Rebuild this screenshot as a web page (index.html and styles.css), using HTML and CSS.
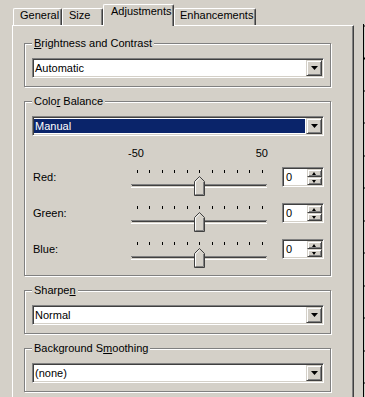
FILE: index.html
```html
<!DOCTYPE html>
<html>
<head>
  <title>Adjustments</title>
  <meta charset="UTF-8">
  <link rel="stylesheet" href="styles.css">
</head>
<body>
  <svg class="defs" width="0" height="0">
    <symbol id="slider" viewBox="0 0 136 30">
      <!-- риски шкалы -->
      <rect x="6" y="3" width="1" height="3" fill="#000"/>
      <rect x="18" y="3" width="1" height="3" fill="#000"/>
      <rect x="31" y="3" width="1" height="3" fill="#000"/>
      <rect x="43" y="3" width="1" height="3" fill="#000"/>
      <rect x="56" y="3" width="1" height="3" fill="#000"/>
      <rect x="68" y="3" width="1" height="3" fill="#000"/>
      <rect x="81" y="3" width="1" height="3" fill="#000"/>
      <rect x="93" y="3" width="1" height="3" fill="#000"/>
      <rect x="106" y="3" width="1" height="3" fill="#000"/>
      <rect x="118" y="3" width="1" height="3" fill="#000"/>
      <rect x="131" y="3" width="1" height="3" fill="#000"/>
      <!-- дорожка -->
      <rect x="0" y="17" width="136" height="1" fill="#808080"/>
      <rect x="1" y="18" width="134" height="1" fill="#404040"/>
      <rect x="1" y="19" width="134" height="1" fill="#d4d0c8"/>
      <rect x="0" y="20" width="136" height="1" fill="#fff"/>
      <!-- ползунок -->
      <polygon points="63.5,14.5 68.5,9.5 73.5,14.5 73.5,28.5 63.5,28.5" fill="#d4d0c8" stroke="#404040" stroke-width="1"/>
      <polyline points="64.5,27.5 64.5,14.9 68.5,10.9" fill="none" stroke="#fff" stroke-width="1"/>
      <polyline points="64.5,27.5 72.5,27.5 72.5,14.9" fill="none" stroke="#808080" stroke-width="1"/>
    </symbol>
    <symbol id="down" viewBox="0 0 7 4">
      <polygon points="0,0 7,0 3.5,4" fill="#000"/>
    </symbol>
  </svg>

  <div class="window">
    <div class="tabs">
      <div class="tab tab-general">General</div>
      <div class="tab tab-size">Size</div>
      <div class="tab tab-adj active">Adjustments</div>
      <div class="tab tab-enh">Enhancements</div>
    </div>

    <div class="panel">
      <div class="group">
        <div class="legend"><u>B</u>rightness and Contrast</div>
        <div class="combo">
          <span class="combo-text">Automatic</span>
          <span class="drop"><svg width="7" height="4"><use href="#down"/></svg></span>
        </div>
      </div>

      <div class="group">
        <div class="legend">Colo<u>r</u> Balance</div>
        <div class="combo">
          <span class="combo-text selected">Manual</span>
          <span class="drop"><svg width="7" height="4"><use href="#down"/></svg></span>
        </div>
        <div class="scale"><span>-50</span><span>50</span></div>

        <div class="slider-row">
          <span class="row-label">Red:</span>
          <svg class="slider" width="136" height="30"><use href="#slider"/></svg>
          <div class="spin">
            <span class="spin-text">0</span>
            <span class="spin-btns">
              <span class="spin-btn up"></span>
              <span class="spin-btn dn"></span>
            </span>
          </div>
        </div>
        <div class="slider-row">
          <span class="row-label">Green:</span>
          <svg class="slider" width="136" height="30"><use href="#slider"/></svg>
          <div class="spin">
            <span class="spin-text">0</span>
            <span class="spin-btns">
              <span class="spin-btn up"></span>
              <span class="spin-btn dn"></span>
            </span>
          </div>
        </div>
        <div class="slider-row">
          <span class="row-label">Blue:</span>
          <svg class="slider" width="136" height="30"><use href="#slider"/></svg>
          <div class="spin">
            <span class="spin-text">0</span>
            <span class="spin-btns">
              <span class="spin-btn up"></span>
              <span class="spin-btn dn"></span>
            </span>
          </div>
        </div>
      </div>

      <div class="group">
        <div class="legend">Sharpe<u>n</u></div>
        <div class="combo">
          <span class="combo-text">Normal</span>
          <span class="drop"><svg width="7" height="4"><use href="#down"/></svg></span>
        </div>
      </div>

      <div class="group last">
        <div class="legend">Background S<u>m</u>oothing</div>
        <div class="combo">
          <span class="combo-text">(none)</span>
          <span class="drop"><svg width="7" height="4"><use href="#down"/></svg></span>
        </div>
      </div>
    </div>
  </div>

  <div class="ruler"></div>
</body>
</html>
```

FILE: styles.css
```css
/* Окно свойств в стиле Windows Classic */
body {
  margin: 0;
  height: 397px;
  overflow: hidden;
  display: flex;
  background: #d4d0c8;
  font-family: "Liberation Sans", Arial, sans-serif;
  font-size: 11px;
  color: #000;
}

.defs {
  position: absolute;
}

.window {
  width: 354px;
  flex-shrink: 0;
}

/* Вкладки */
.tabs {
  display: flex;
  align-items: flex-end;
  height: 25px;
  padding-left: 13px;
}

.tab {
  box-sizing: border-box;
  height: 17px;
  line-height: 13px;
  padding-left: 6px;
  border-top: 1px solid #fff;
  border-left: 1px solid #fff;
  border-right: 1px solid #404040;
  border-radius: 2px 2px 0 0;
  box-shadow: inset -1px 0 #808080;
  white-space: nowrap;
}

.tab-general { width: 49px; }
.tab-size { width: 41px; }
.tab-adj { width: 71px; padding-left: 7px; }
.tab-enh { width: 82px; padding-left: 5px; }

.tab.active {
  height: 22px;
  margin-bottom: -1px;
  position: relative;
  z-index: 1;
  background: #d4d0c8;
}

/* Панель вкладки */
.panel {
  box-sizing: border-box;
  margin-left: 12px;
  width: 342px;
  height: 372px;
  padding: 17px 0 0 11px;
  border-top: 1px solid #fff;
  border-left: 1px solid #fff;
  border-right: 1px solid #404040;
  box-shadow: inset -1px 0 #808080;
}

/* Группы */
.group {
  box-sizing: border-box;
  width: 307px;
  margin-bottom: 14px;
  padding: 0 6px 8px 7px;
  border: 1px solid #808080;
  box-shadow: inset 1px 1px #fff, 1px 1px #fff;
}

.group.last {
  margin-bottom: 0;
}

.legend {
  width: fit-content;
  margin-top: -7px;
  padding: 0 2px;
  line-height: 13px;
  background: #d4d0c8;
}

/* Выпадающие списки */
.combo {
  box-sizing: border-box;
  display: flex;
  height: 20px;
  margin-top: 8px;
  padding: 1px;
  background: #fff;
  border: 1px solid;
  border-color: #808080 #fff #fff #808080;
  box-shadow: inset 1px 1px #404040, inset -1px -1px #d4d0c8;
}

.combo-text {
  flex: 1;
  margin: 1px 1px 1px 0;
  padding-left: 1px;
  line-height: 14px;
}

.combo-text.selected {
  background: #0a246a;
  color: #fff;
}

.drop {
  box-sizing: border-box;
  width: 16px;
  height: 16px;
  display: flex;
  align-items: center;
  justify-content: center;
  background: #d4d0c8;
  border: 1px solid;
  border-color: #d4d0c8 #404040 #404040 #d4d0c8;
  box-shadow: inset 1px 1px #fff, inset -1px -1px #808080;
}

/* Шкала и ползунки */
.scale {
  display: flex;
  justify-content: space-between;
  width: 140px;
  margin: 11px 0 0 96px;
  line-height: 13px;
}

.group .slider-row:last-child {
  margin-bottom: -8px;
}

.slider-row {
  display: flex;
  align-items: flex-start;
  height: 36px;
}

.scale + .slider-row {
  margin-top: 7px;
}

.row-label {
  width: 98px;
  padding-left: 1px;
  margin-top: 4px;
  line-height: 13px;
}

.slider {
  display: block;
  margin-right: 15px;
}

/* Счётчики */
.spin {
  box-sizing: border-box;
  display: flex;
  width: 42px;
  height: 20px;
  padding: 1px;
  background: #fff;
  border: 1px solid;
  border-color: #808080 #fff #fff #808080;
  box-shadow: inset 1px 1px #404040, inset -1px -1px #d4d0c8;
}

.spin-text {
  flex: 1;
  padding-left: 2px;
  line-height: 16px;
}

.spin-btns {
  display: flex;
  flex-direction: column;
  width: 15px;
}

.spin-btn {
  box-sizing: border-box;
  height: 8px;
  position: relative;
  background: #d4d0c8;
  border: 1px solid;
  border-color: #d4d0c8 #404040 #404040 #d4d0c8;
  box-shadow: inset 1px 1px #fff, inset -1px -1px #808080;
}

.spin-btn::after {
  content: "";
  position: absolute;
  left: 4px;
  width: 0;
  height: 0;
  border-left: 2.5px solid transparent;
  border-right: 2.5px solid transparent;
}

.spin-btn.up::after {
  top: 1.5px;
  border-bottom: 3px solid #000;
}

.spin-btn.dn::after {
  top: 1.5px;
  border-top: 3px solid #000;
}

/* Линейка соседнего окна справа */
.ruler {
  flex-shrink: 0;
  width: 2px;
  margin: 24px 0 0 9px;
  border-left: 1px solid #000;
  background: repeating-linear-gradient(to bottom, #000 0 1px, transparent 1px 32.5px);
  background-position: 0 1.5px;
}
```
